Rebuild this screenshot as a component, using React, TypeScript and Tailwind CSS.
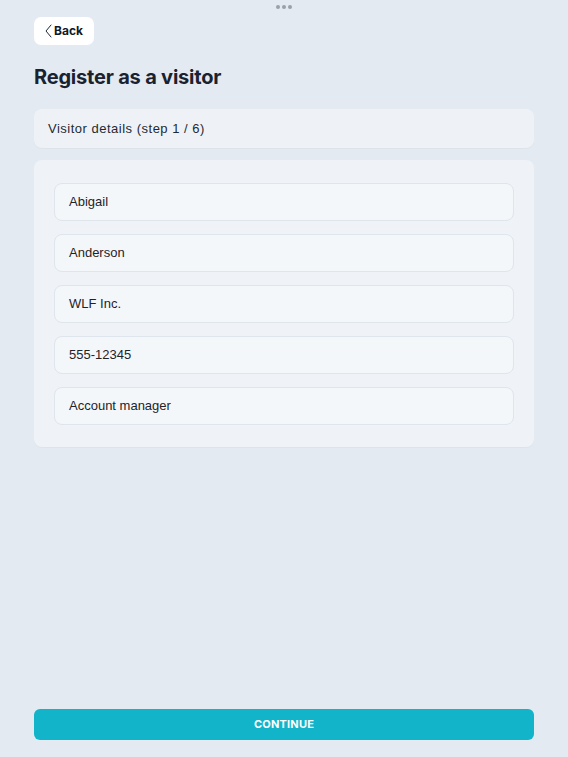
const fields = ["Abigail", "Anderson", "WLF Inc.", "555-12345", "Account manager"];

export default function App() {
  return (
    <div
      className="h-[757px] w-full bg-[#e3eaf2] flex flex-col px-[34px]"
      style={{ fontFamily: "'Liberation Sans', Arial, sans-serif" }}
    >
      {/* top grabber dots */}
      <div className="flex justify-center gap-[2px] pt-[5px] h-[17px]">
        <span className="w-[4px] h-[4px] rounded-full bg-[#9aa1aa]" />
        <span className="w-[4px] h-[4px] rounded-full bg-[#9aa1aa]" />
        <span className="w-[4px] h-[4px] rounded-full bg-[#9aa1aa]" />
      </div>

      <div className="flex">
        <button className="h-[28px] w-[60px] bg-white rounded-[7px] flex items-center pl-[11px] gap-[2px] text-[#111827] text-[12px] font-bold font-['Inter',sans-serif]">
          <svg width="7" height="14" viewBox="0 0 7 14" fill="none" className="-mt-[1px]">
            <polyline points="6,1 1,7 6,13" stroke="#1f2937" strokeWidth="1" strokeLinecap="round" strokeLinejoin="round" />
          </svg>
          <span>Back</span>
        </button>
      </div>

      <h1 className="mt-[18px] text-[20px] leading-[28px] font-bold text-[#1a2230] font-['Inter',sans-serif] tracking-[-0.2px]">
        Register as a visitor
      </h1>

      <div className="mt-[18px] h-[39px] rounded-[8px] bg-[#eef2f7] flex items-center px-[14px] text-[13px] tracking-[0.5px] text-[#1f2933] shadow-[0_1px_1px_rgba(0,0,0,0.03)]">
        Visitor details (step 1 / 6)
      </div>

      <div className="mt-[12px] rounded-[8px] bg-[#eff3f7] px-[20px] pt-[23px] pb-[22px] flex flex-col gap-[13px] shadow-[0_1px_1px_rgba(0,0,0,0.03)]">
        {fields.map((f) => (
          <div
            key={f}
            className="h-[38px] rounded-[8px] bg-[#f4f7fa] border border-[#dfe5ec] flex items-center px-[14px] text-[13px] text-[#1f2328]"
          >
            {f}
          </div>
        ))}
      </div>

      <div className="flex-1" />

      <button className="mb-[17px] h-[31px] w-full rounded-[6px] bg-[#11b4c9] text-white text-[11px] font-bold tracking-[0.2px] font-['Inter',sans-serif]">
        CONTINUE
      </button>
    </div>
  );
}
